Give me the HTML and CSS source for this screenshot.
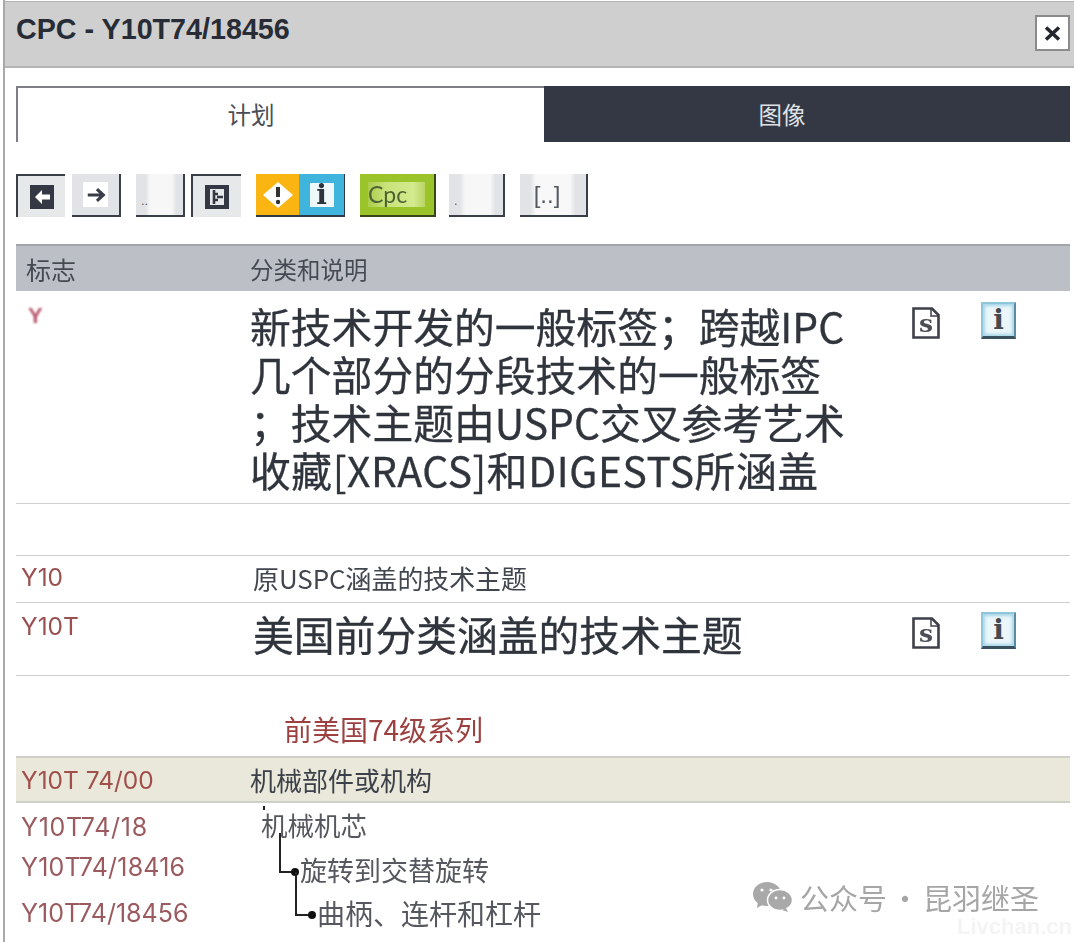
FILE: index.html
```html
<!DOCTYPE html>
<html lang="zh">
<head>
<meta charset="utf-8">
<title>CPC - Y10T74/18456</title>
<link rel="stylesheet" href="styles.css">
</head>
<body>
<div class="dialog">
  <header class="titlebar">
    <h1 class="title">CPC - Y10T74/18456</h1>
    <button class="close" type="button" aria-label="关闭">
      <svg width="19" height="17" viewBox="0 0 19 17"><path d="M3 2.5L16 14.5M16 2.5L3 14.5" stroke="#23262c" stroke-width="3.6"/></svg>
    </button>
  </header>
  <div class="content">
    <nav class="tabs">
      <div class="tab tab-active">计划</div>
      <div class="tab tab-dark">图像</div>
    </nav>
    <div class="toolbar">
      <div class="tool tool-in w49">
        <svg width="24" height="24" viewBox="0 0 24 24"><rect width="24" height="24" fill="#333844"/><path d="M12 5L5 12L12 19V14.5H20V9.5H12Z" fill="#fff"/></svg>
      </div>
      <div class="tool tool-out w49 gap-s">
        <span class="tool-plate"><svg width="22" height="22" viewBox="0 0 24 24"><path d="M3 12H19M13 5.5L20 12L13 18.5" fill="none" stroke="#3a3e48" stroke-width="3.4"/></svg></span>
      </div>
      <div class="tool tool-out w49 gap-m tool-dots">..</div>
      <div class="tool tool-in w50 gap-xs">
        <svg width="24" height="24" viewBox="0 0 24 24"><rect width="24" height="24" fill="#333844"/><path d="M5 4H19V20H5Z" fill="#e6e8ea"/><path d="M9 5V19M9 9H13M9 15H13M12 12H18" stroke="#333844" stroke-width="2.6" fill="none"/></svg>
      </div>
      <div class="tool tool-pair gap-m">
        <span class="pair-warn">
          <svg width="30" height="26" viewBox="0 0 30 26"><path d="M15 0L30 13L15 26L0 13Z" fill="#fff"/><path d="M15 5V15" stroke="#333" stroke-width="4"/><circle cx="15" cy="20" r="2.2" fill="#333"/></svg>
        </span>
        <span class="pair-info">
          <span class="info-plate">i</span>
        </span>
      </div>
      <div class="tool tool-cpc gap-m"><span class="cpc-plate">Cpc</span></div>
      <div class="tool tool-out w56 gap-l tool-dots">.</div>
      <div class="tool tool-out w68 gap-m tool-bracket">[..]</div>
    </div>

    <div class="row row-head">
      <span class="col-code head-code">标志</span>
      <span class="col-main">分类和说明</span>
    </div>

    <div class="row row-big row-first">
      <span class="col-code mark-y">Y</span>
      <div class="big-text big-first">
        <div>新技术开发的一般标签；跨越IPC</div>
        <div>几个部分的分段技术的一般标签</div>
        <div>；技术主题由USPC交叉参考艺术</div>
        <div class="big-spread">收藏[XRACS]和DIGESTS所涵盖</div>
      </div>
      <div class="row-icons">
        <svg class="icon-s" width="28" height="32" viewBox="0 0 28 32"><path d="M1.5 1.5H20L26.5 8V30.5H1.5Z" fill="#fff" stroke="#3d4048" stroke-width="2.6"/><path d="M19 2V9H26" fill="none" stroke="#3d4048" stroke-width="1.5"/><text x="14" y="25" text-anchor="middle" class="icon-s-text">s</text></svg>
        <span class="icon-i">i</span>
      </div>
    </div>

    <div class="spacer-row"></div>

    <div class="row row-y10">
      <span class="col-code code">Y10</span>
      <span class="col-main y10-text">原USPC涵盖的技术主题</span>
    </div>

    <div class="row row-big row-y10t">
      <span class="col-code code">Y10T</span>
      <p class="big-text big-second">美国前分类涵盖的技术主题</p>
      <div class="row-icons row-icons-second">
        <svg class="icon-s" width="28" height="32" viewBox="0 0 28 32"><path d="M1.5 1.5H20L26.5 8V30.5H1.5Z" fill="#fff" stroke="#3d4048" stroke-width="2.6"/><path d="M19 2V9H26" fill="none" stroke="#3d4048" stroke-width="1.5"/><text x="14" y="25" text-anchor="middle" class="icon-s-text">s</text></svg>
        <span class="icon-i">i</span>
      </div>
    </div>

    <div class="series-note">前美国74级系列</div>

    <div class="row row-hl">
      <span class="col-code code code-hl">Y10T 74/00</span>
      <span class="col-main hl-text">机械部件或机构</span>
    </div>

    <div class="tree">
      <svg class="tree-lines" width="320" height="120" viewBox="0 0 320 120">
        <path d="M248 1V5" stroke="#222" stroke-width="2"/>
        <path d="M264 28V67H279" fill="none" stroke="#222" stroke-width="2"/>
        <circle cx="279" cy="67" r="4" fill="#111"/>
        <path d="M280 67V110H296" fill="none" stroke="#222" stroke-width="2"/>
        <circle cx="296" cy="110" r="4" fill="#111"/>
      </svg>
      <div class="tree-row tree-row-1">
        <span class="tree-code">Y10T74/18</span>
        <span class="tree-label label-1">机械机芯</span>
      </div>
      <div class="tree-row tree-row-2">
        <span class="tree-code">Y10T74/18416</span>
        <span class="tree-label label-2">旋转到交替旋转</span>
      </div>
      <div class="tree-row tree-row-3">
        <span class="tree-code">Y10T74/18456</span>
        <span class="tree-label label-3">曲柄、连杆和杠杆</span>
      </div>
    </div>
  </div>

  <div class="watermark">
    <svg width="42" height="30" viewBox="0 0 42 30"><ellipse cx="15" cy="12" rx="14" ry="12" fill="#a9a9a9"/><path d="M6 19L5 26L12 22Z" fill="#a9a9a9"/><ellipse cx="28" cy="18" rx="12.5" ry="10.5" fill="#a9a9a9" stroke="#fff" stroke-width="1.5"/><path d="M34 26L36 30L30 28Z" fill="#a9a9a9"/><circle cx="10" cy="8" r="1.6" fill="#fff"/><circle cx="19" cy="8" r="1.6" fill="#fff"/><circle cx="24" cy="16" r="1.4" fill="#fff"/><circle cx="32" cy="16" r="1.4" fill="#fff"/></svg>
    <span class="wm-text">公众号 · 昆羽继圣</span>
  </div>
  <div class="wm-faint">Livchan.cn</div>
</div>
</body>
</html>
```

FILE: styles.css
```css
* { box-sizing: border-box; }
html, body { margin: 0; padding: 0; background: #fff; height: 942px; overflow: hidden; }
body { font-family: "Noto Sans CJK SC", "Noto Sans", sans-serif; color: #3c4049; }

.dialog {
  position: relative;
  width: 1071px;
  height: 942px;
  margin-left: 3px;
  padding-top: 1px;
  border-left: 2px solid #a9a9a9;
  overflow: hidden;
  filter: blur(0.45px);
}

.titlebar {
  display: flex;
  justify-content: space-between;
  align-items: flex-start;
  height: 67px;
  padding: 13px 4px 0 11px;
  background: #cfcfcf;
  border-top: 1px solid #b4b4b4;
  border-bottom: 2px solid #b4b4b4;
}
.title {
  margin: -1px 0 0;
  font: bold 28.7px/30px "Liberation Sans", Arial, sans-serif;
  color: #272c36;
}
.close {
  display: flex;
  align-items: center;
  justify-content: center;
  width: 35px;
  height: 36px;
  padding: 0;
  background: #fff;
  border: 2px solid #8b8b8b;
}

.content { width: 1065px; padding: 0 0 0 11px; }

.tabs { display: flex; margin-top: 18px; height: 56px; }
.tab { display: flex; align-items: center; justify-content: center; font-size: 23.5px; }
.tab-active {
  width: 528px;
  color: #4a4d55;
  background: #fff;
  border-top: 2px solid #7d7f84;
  border-left: 2px solid #7d7f84;
  padding-right: 60px;
  padding-bottom: 2px;
}
.tab-dark { width: 526px; padding-right: 50px; background: #333844; color: #dfe1e4; }

.toolbar { display: flex; margin-top: 32px; height: 43px; }
.tool {
  display: flex;
  align-items: center;
  justify-content: center;
  height: 43px;
  flex: none;
  background: #e1e3e6;
}
.w49 { width: 49px; }
.w50 { width: 50px; }
.w56 { width: 56px; }
.w68 { width: 68px; }
.gap-xs { margin-left: 6px; }
.gap-s { margin-left: 7px; }
.gap-m { margin-left: 15px; }
.gap-l { margin-left: 13px; }
.tool-in { border-top: 2px solid #3a3e48; border-left: 2px solid #3a3e48; background: #e6e8ea; }
.tool-out { border-bottom: 2px solid #3a3e48; border-right: 2px solid #3a3e48; }
.tool-plate { display: flex; align-items: center; justify-content: center; width: 25px; height: 25px; background: #fff; }
.tool-dots {
  justify-content: flex-start;
  align-items: flex-end;
  padding: 0 0 6px 5px;
  font: 13px/16px "Liberation Sans", sans-serif;
  color: #666;
  background: linear-gradient(90deg, #e1e3e6 20%, #f7f7f7 30%, #f7f7f7 76%, #e1e3e6 86%);
}
.tool-bracket {
  padding-right: 12px;
  font: 24px/30px "Liberation Sans", sans-serif;
  color: #555a62;
  background: linear-gradient(90deg, #e1e3e6 16%, #f8f8f8 24%, #f8f8f8 76%, #e1e3e6 84%);
}
.tool-pair { width: 89px; border-bottom: 2px solid #2d3a48; border-right: 1px solid #2d3a48; justify-content: flex-start; background: #3fb4dc; }
.pair-warn { display: flex; align-items: center; justify-content: center; width: 43px; height: 41px; background: #fbb512; }
.pair-info { display: flex; align-items: center; justify-content: center; flex: 1; height: 41px; }
.info-plate {
  width: 24px;
  height: 24px;
  background: #eef8fb;
  color: #2d333c;
  text-align: center;
  font: bold 28px/24px "DejaVu Serif", serif;
}
.tool-cpc { width: 76px; background: #9ac42a; border-bottom: 2px solid #39461a; border-right: 2px solid #39461a; justify-content: flex-start; padding-left: 8px; }
.cpc-plate {
  width: 57px;
  height: 25px;
  background: linear-gradient(90deg, #a9cc4a, #c8e27a 30%, #d3ea8e 80%, #b9d564);
  color: #4d6333;
  font: 23px/25px "Lato", sans-serif;
}

.row { display: flex; }
.col-code { flex: none; width: 235px; }
.col-main { flex: 1; }
.row-head {
  height: 47px;
  margin-top: 27px;
  align-items: center;
  background: #bcc0c6;
  border-top: 2px solid #a1a5aa;
  font-size: 23.5px;
  color: #444a54;
}
.head-code { padding-left: 10px; font-size: 25px; }
.row-head .col-main { margin-left: -1px; }

.row-big { position: relative; }
.row-first { height: 213px; border-bottom: 1px solid #cfcfcf; }
.mark-y {
  padding: 12px 0 0 12px;
  font: bold 22px/26px "Liberation Sans", sans-serif;
  color: #b9536a;
  filter: blur(0.8px);
}
.big-text {
  margin: 0 0 0 -1px;
  font-size: 40.8px;
  line-height: 48px;
  color: #30343c;
  -webkit-text-stroke: 0.3px #30343c;
  white-space: nowrap;
}
.big-first { padding-top: 11px; }
.big-spread { word-spacing: 0; letter-spacing: 0.55px; }
.row-icons {
  position: absolute;
  left: 896px;
  top: 11px;
  display: flex;
  align-items: flex-end;
  gap: 41px;
}
.row-icons-second { top: 9px; }
.icon-s { flex: none; margin-bottom: 0; }
.icon-s-text { font: bold 25px "DejaVu Serif", serif; fill: #4c4f55; }
.icon-i {
  display: block;
  width: 35px;
  height: 37px;
  background: #eaf6fa;
  border: 2px solid #8fc6dc;
  border-bottom: 3px solid #39505e;
  border-right: 2px solid #5b8ba0;
  box-shadow: inset 0 0 3px 2px #a8d6e8;
  color: #454a50;
  text-align: center;
  font: bold 28px/31px "DejaVu Serif", serif;
}

.spacer-row { height: 52px; border-bottom: 1px solid #cfcfcf; }

.row-y10 { height: 47px; align-items: center; border-bottom: 1px solid #cfcfcf; padding-bottom: 4px; }
.code { padding-left: 5px; font-family: Inter, "Noto Sans", sans-serif; font-size: 24.5px; color: #9a5050; }
.y10-text { padding-left: 2px; font-size: 25.9px; color: #42464e; }

.row-y10t { height: 73px; border-bottom: 1px solid #cfcfcf; }
.row-y10t .code { padding-top: 8px; }
.big-second { padding: 7px 0 0 3px; }

.series-note {
  height: 80px;
  padding: 33px 0 0 268px;
  font-size: 28px;
  line-height: 40px;
  color: #9c4040;
}

.row-hl {
  height: 47px;
  align-items: center;
  background: #e9e8da;
  border-top: 2px solid #cfcfc6;
  border-bottom: 2px solid #cfcfc6;
}
.code-hl { color: #a04f4a; }
.hl-text { margin-left: -1px; font-size: 26px; color: #3c4049; }

.tree { position: relative; }
.tree-lines { position: absolute; left: 0; top: 0; }
.tree-row { display: flex; align-items: center; height: 44px; }
.tree-row-1 { margin-top: 2px; height: 44px; }
.tree-row-2 { height: 40px; }
.tree-row-3 { margin-top: 1px; height: 46px; }
.tree-code { flex: none; width: 235px; padding-left: 5px; font: 25px/30px Inter, "Noto Sans", sans-serif; color: #9a5a5e; white-space: nowrap; }
.tree-row-1 .tree-code { letter-spacing: 0.7px; }
.tree-row-2 .tree-code { margin-bottom: 4px; letter-spacing: 0.2px; }
.tree-label { color: #55595f; white-space: nowrap; }
.label-1 { margin-left: 10px; margin-bottom: 6px; font-size: 26.5px; }
.label-2 { margin-left: 49px; font-size: 27px; }
.label-3 { margin-left: 66px; font-size: 28px; }

.watermark {
  position: absolute;
  left: 747px;
  top: 879px;
  display: flex;
  align-items: center;
  gap: 6px;
}
.wm-text { font-size: 29px; word-spacing: -3px; line-height: 36px; color: #a6a6a6; white-space: nowrap; }
.wm-faint {
  position: absolute;
  left: 952px;
  top: 912px;
  font: bold 22px/30px "Liberation Sans", sans-serif;
  color: #f4f4f4;
}
```
